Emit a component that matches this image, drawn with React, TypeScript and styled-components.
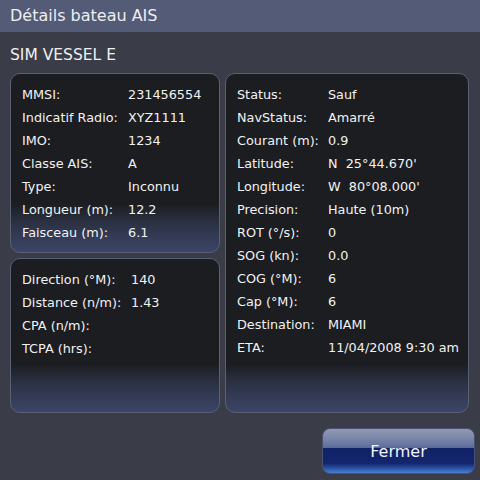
import React from 'react';
import styled, { createGlobalStyle } from 'styled-components';

const GlobalStyle = createGlobalStyle`
  html, body {
    margin: 0;
    padding: 0;
    background: #3a3c48;
  }
  body {
    font-family: "DejaVu Sans", "Liberation Sans", sans-serif;
    color: #f2f2f2;
  }
`;

const Screen = styled.div`
  width: 480px;
  height: 480px;
  background: #3a3c48;
  display: flex;
  flex-direction: column;
  overflow: hidden;
`;

const TitleBar = styled.div`
  height: 32px;
  background: #535b77;
  padding-left: 10px;
  font-size: 16px;
  line-height: 31px;
  color: #eeeeee;
`;

const VesselName = styled.div`
  padding: 8px 10px 0;
  height: 33px;
  font-size: 15.5px;
  line-height: 30px;
  color: #f0f0f0;
`;

const PanelGrid = styled.div`
  display: grid;
  grid-template-columns: 210px 244px;
  grid-template-rows: 180px 155px;
  gap: 5px;
  padding-left: 10px;
`;

const Panel = styled.div<{ $col: number; $row: string }>`
  grid-column: ${(p) => p.$col};
  grid-row: ${(p) => p.$row};
  box-sizing: border-box;
  border: 1px solid #5a5f74;
  border-radius: 10px;
  padding: 9px 0 0 11px;
  background: linear-gradient(
    to bottom,
    #1b1d21 0,
    #1b1d21 calc(100% - 48px),
    #22262f calc(100% - 40px),
    #2b3142 calc(100% - 30px),
    #343c58 calc(100% - 14px),
    #3b4568 100%
  );
`;

const Rows = styled.div<{ $labelWidth: number }>`
  display: grid;
  grid-template-columns: ${(p) => p.$labelWidth}px auto;
  font-size: 12.8px;
  line-height: 23px;
  white-space: nowrap;
  color: #f2f2f2;
`;

const Label = styled.span``;

const Value = styled.span``;

const Footer = styled.div`
  display: flex;
  justify-content: flex-end;
  padding: 15px 5px 0 0;
`;

const CloseButton = styled.button`
  width: 153px;
  height: 46px;
  box-sizing: border-box;
  border: 1px solid #4a5170;
  border-radius: 8px;
  font-family: "DejaVu Sans", "Liberation Sans", sans-serif;
  font-size: 16px;
  color: #f4f4f4;
  padding: 0;
  background: linear-gradient(
    to bottom,
    #9199b2 0,
    #7a86a8 22%,
    #5d6c9c 42%,
    #102166 43%,
    #13266e 78%,
    #2a55a8 90%,
    #4a80d0 100%
  );
`;

type Row = [string, string];

const vessel: Row[] = [
  ['MMSI:', '231456554'],
  ['Indicatif Radio:', 'XYZ1111'],
  ['IMO:', '1234'],
  ['Classe AIS:', 'A'],
  ['Type:', 'Inconnu'],
  ['Longueur (m):', '12.2'],
  ['Faisceau (m):', '6.1'],
];

const position: Row[] = [
  ['Direction (°M):', '140'],
  ['Distance (n/m):', '1.43'],
  ['CPA (n/m):', ''],
  ['TCPA (hrs):', ''],
];

const status: Row[] = [
  ['Status:', 'Sauf'],
  ['NavStatus:', 'Amarré'],
  ['Courant (m):', '0.9'],
  ['Latitude:', 'N\u00a0 25°44.670\''],
  ['Longitude:', 'W\u00a0 80°08.000\''],
  ['Precision:', 'Haute (10m)'],
  ['ROT (°/s):', '0'],
  ['SOG (kn):', '0.0'],
  ['COG (°M):', '6'],
  ['Cap (°M):', '6'],
  ['Destination:', 'MIAMI'],
  ['ETA:', '11/04/2008 9:30 am'],
];

const InfoRows = ({ rows, labelWidth }: { rows: Row[]; labelWidth: number }) => (
  <Rows $labelWidth={labelWidth}>
    {rows.map(([label, value]) => (
      <React.Fragment key={label}>
        <Label>{label}</Label>
        <Value>{value}</Value>
      </React.Fragment>
    ))}
  </Rows>
);

const App = (): JSX.Element => (
  <Screen>
    <GlobalStyle />
    <TitleBar>Détails bateau AIS</TitleBar>
    <VesselName>SIM VESSEL E</VesselName>
    <PanelGrid>
      <Panel $col={1} $row="1">
        <InfoRows rows={vessel} labelWidth={106} />
      </Panel>
      <Panel $col={2} $row="1 / span 2">
        <InfoRows rows={status} labelWidth={91} />
      </Panel>
      <Panel $col={1} $row="2">
        <InfoRows rows={position} labelWidth={109} />
      </Panel>
    </PanelGrid>
    <Footer>
      <CloseButton>Fermer</CloseButton>
    </Footer>
  </Screen>
);

export default App;
